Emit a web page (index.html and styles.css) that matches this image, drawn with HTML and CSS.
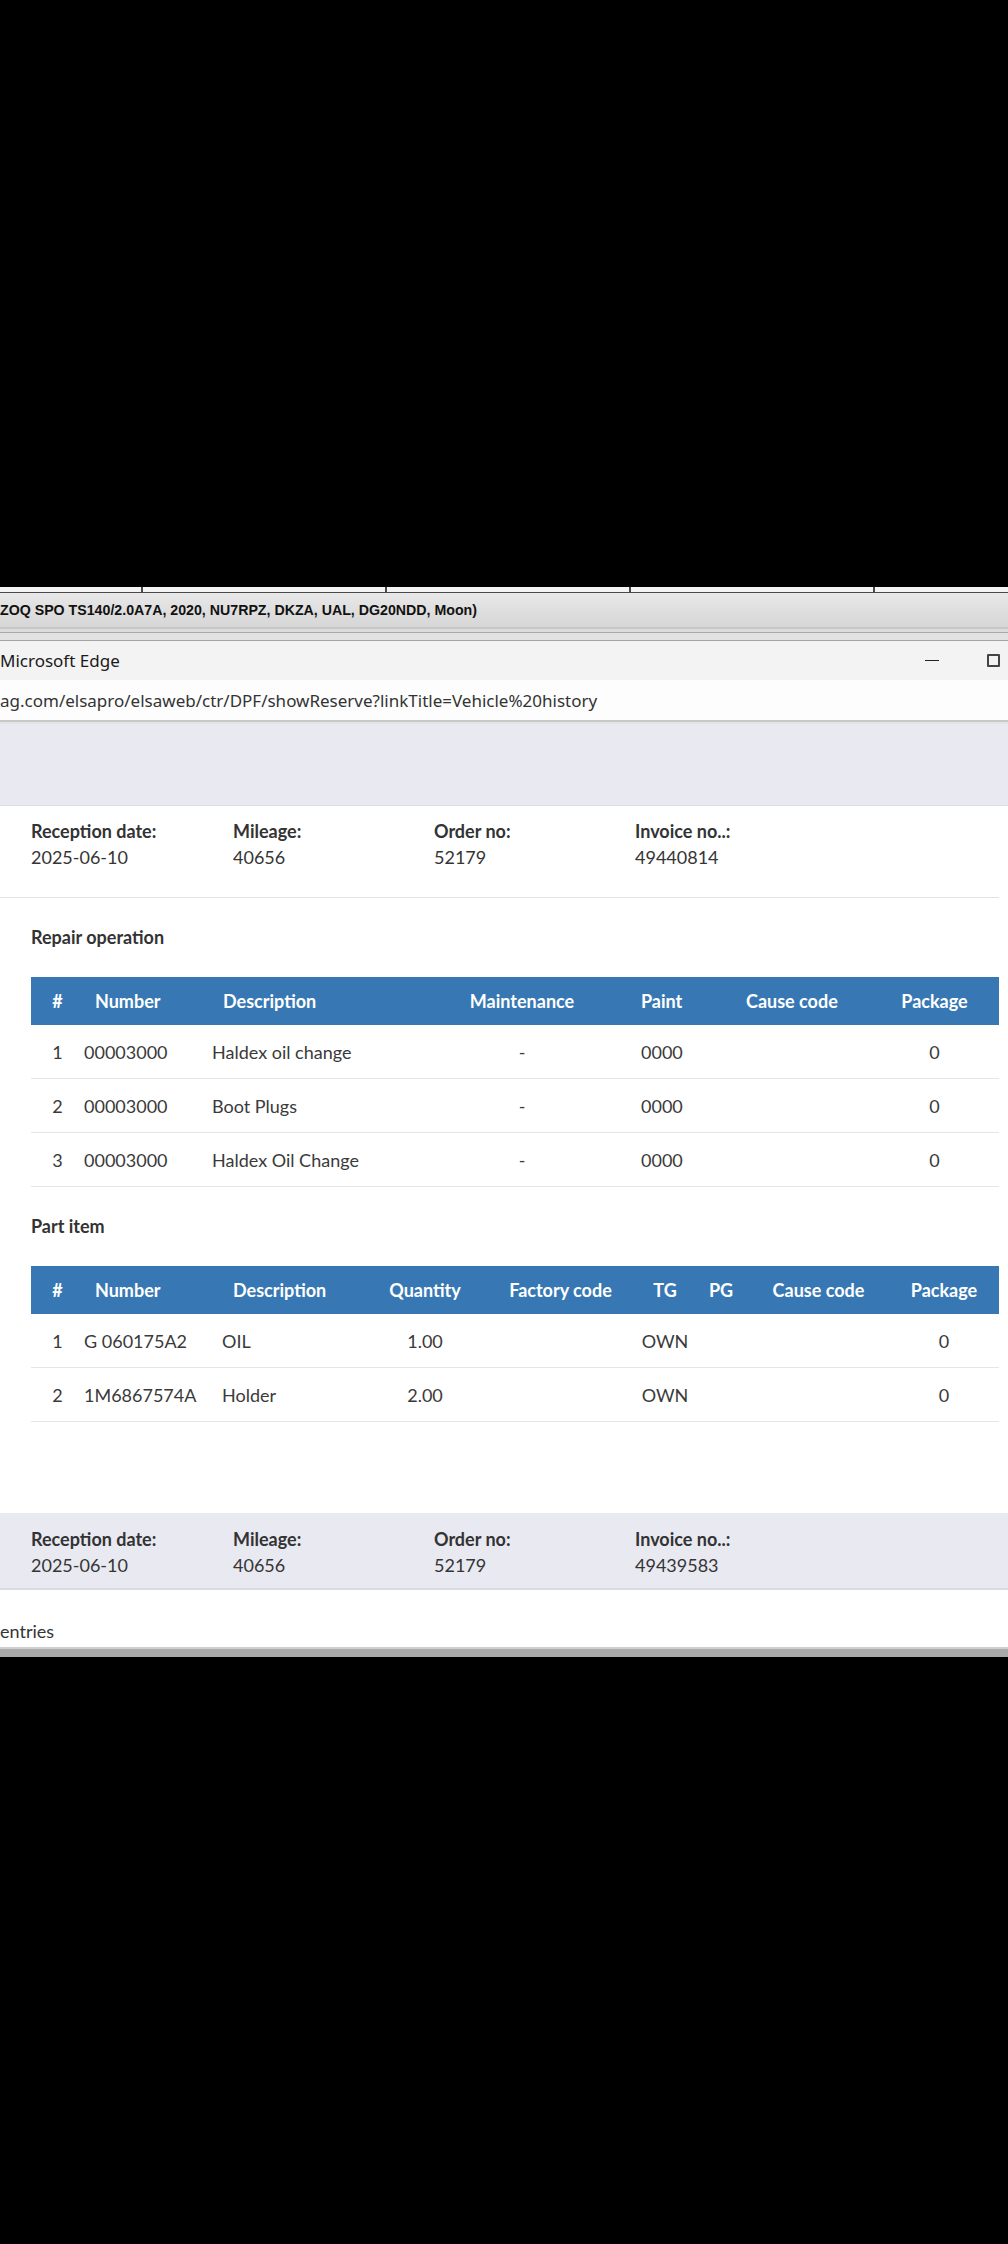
FILE: index.html
```html
<!DOCTYPE html>
<html lang="en">
<head>
<meta charset="utf-8">
<title>Vehicle history</title>
<link rel="stylesheet" href="styles.css">
</head>
<body>
<div class="black-top"></div>
<div class="colstrip">
  <div class="cs c1"></div><div class="cs c2"></div><div class="cs c3"></div><div class="cs c4"></div><div class="cs c5"></div>
</div>
<div class="titlebar"><span class="title-text">ZOQ SPO TS140/2.0A7A, 2020, NU7RPZ, DKZA, UAL, DG20NDD, Moon)</span></div>
<div class="sep"><div class="sep-inner"></div></div>
<div class="edgebar">
  <span class="edge-title">Microsoft Edge</span>
  <div class="win-controls">
    <span class="minimize"></span>
    <span class="maximize"></span>
  </div>
</div>
<div class="urlbar"><span class="url">ag.com/elsapro/elsaweb/ctr/DPF/showReserve?linkTitle=Vehicle%20history</span></div>
<div class="urlline"></div>
<div class="page">
  <div class="lav-top"></div>
  <div class="record">
    <div class="details">
      <div class="field"><div class="label">Reception date:</div><div class="value">2025-06-10</div></div>
      <div class="field"><div class="label">Mileage:</div><div class="value">40656</div></div>
      <div class="field"><div class="label">Order no:</div><div class="value">52179</div></div>
      <div class="field"><div class="label">Invoice no..:</div><div class="value">49440814</div></div>
    </div>
  </div>
  <div class="section">
    <h2 class="section-title">Repair operation</h2>
    <table class="grid">
      <colgroup>
        <col style="width:53px"><col style="width:128px"><col style="width:225px"><col style="width:170px"><col style="width:128px"><col style="width:135px"><col style="width:129px">
      </colgroup>
      <thead>
        <tr><th class="ctr">#</th><th class="hpad">Number</th><th class="hpad">Description</th><th class="ctr">Maintenance</th><th class="pad34">Paint</th><th class="hpad">Cause code</th><th class="ctr">Package</th></tr>
      </thead>
      <tbody>
        <tr><td class="ctr">1</td><td>00003000</td><td>Haldex oil change</td><td class="ctr">-</td><td class="pad34">0000</td><td></td><td class="ctr">0</td></tr>
        <tr><td class="ctr">2</td><td>00003000</td><td>Boot Plugs</td><td class="ctr">-</td><td class="pad34">0000</td><td></td><td class="ctr">0</td></tr>
        <tr><td class="ctr">3</td><td>00003000</td><td>Haldex Oil Change</td><td class="ctr">-</td><td class="pad34">0000</td><td></td><td class="ctr">0</td></tr>
      </tbody>
    </table>
    <h2 class="section-title">Part item</h2>
    <table class="grid">
      <colgroup>
        <col style="width:53px"><col style="width:138px"><col style="width:143px"><col style="width:120px"><col style="width:151px"><col style="width:58px"><col style="width:54px"><col style="width:141px"><col style="width:110px">
      </colgroup>
      <thead>
        <tr><th class="ctr">#</th><th class="hpad">Number</th><th class="hpad">Description</th><th class="ctr">Quantity</th><th class="ctr">Factory code</th><th class="ctr">TG</th><th class="ctr">PG</th><th class="ctr">Cause code</th><th class="ctr">Package</th></tr>
      </thead>
      <tbody>
        <tr><td class="ctr">1</td><td>G 060175A2</td><td>OIL</td><td class="ctr">1.00</td><td></td><td class="ctr">OWN</td><td></td><td></td><td class="ctr">0</td></tr>
        <tr><td class="ctr">2</td><td>1M6867574A</td><td>Holder</td><td class="ctr">2.00</td><td></td><td class="ctr">OWN</td><td></td><td></td><td class="ctr">0</td></tr>
      </tbody>
    </table>
  </div>
  <div class="record lav">
    <div class="details">
      <div class="field"><div class="label">Reception date:</div><div class="value">2025-06-10</div></div>
      <div class="field"><div class="label">Mileage:</div><div class="value">40656</div></div>
      <div class="field"><div class="label">Order no:</div><div class="value">52179</div></div>
      <div class="field"><div class="label">Invoice no..:</div><div class="value">49439583</div></div>
    </div>
  </div>
  <div class="footer-info">entries</div>
</div>
<div class="bottom-bar"></div>
</body>
</html>
```
FILE: styles.css
```css
html, body {
  margin: 0;
  padding: 0;
  background: #000;
}
body {
  width: 1008px;
  min-height: 2244px;
  overflow: hidden;
}
.black-top {
  height: 587px;
  background: #000;
}
.colstrip {
  display: flex;
  height: 5px;
  background: #f4f4f4;
  border-bottom: 1px solid #4a4a4a;
}
.cs {
  height: 100%;
  border-right: 2px solid #4a4a4a;
}
.c1 { width: 141px; }
.c2 { width: 242px; }
.c3 { width: 242px; }
.c4 { width: 242px; }
.c5 { flex: 1; border-right: none; }
.titlebar {
  height: 34px;
  background: linear-gradient(#e8e8e8, #d6d6d6);
  display: flex;
  align-items: center;
  white-space: nowrap;
}
.title-text {
  font-family: "Liberation Sans", Arial, sans-serif;
  font-weight: bold;
  font-size: 14.2px;
  color: #111;
}
.sep {
  height: 14px;
  background: #dcdcdc;
  border-top: 2px solid #c6c6c6;
  box-sizing: border-box;
}
.sep-inner {
  margin-top: 3px;
  height: 7px;
  border-top: 1px solid #a9a9a9;
  border-bottom: 1px solid #a4a4a4;
  background: #e2e2e2;
}
.edgebar {
  height: 39px;
  background: #f3f3f3;
  display: flex;
  align-items: center;
  justify-content: space-between;
  white-space: nowrap;
}
.edge-title {
  font-family: "Noto Sans", "Open Sans", sans-serif;
  font-size: 17px;
  color: #1a1a1a;
}
.win-controls {
  display: flex;
  align-items: center;
  gap: 48px;
  margin-right: 8px;
}
.minimize {
  display: block;
  width: 14px;
  height: 1.5px;
  background: #222;
}
.maximize {
  display: block;
  width: 9px;
  height: 9px;
  border: 2px solid #444;
  border-radius: 1px;
}
.urlbar {
  height: 40px;
  background: #fdfdfd;
  display: flex;
  align-items: center;
  white-space: nowrap;
}
.url {
  font-family: "Noto Sans", "Open Sans", sans-serif;
  font-size: 17px;
  color: #333;
}
.urlline {
  height: 4px;
  background: #e4e4e4;
  border-top: 2px solid #c8c8c8;
  box-sizing: border-box;
}
.page {
  background: #fff;
  font-family: Lato, "Open Sans", sans-serif;
  color: #353535;
}
.lav-top {
  height: 81px;
  background: #e9e9f2;
  border-bottom: 1px solid #dcdce6;
}
.record {
  margin-right: 9px;
  padding: 12px 0 27px 31px;
  border-bottom: 1px solid #e2e2e2;
}
.record.lav {
  margin-right: 0;
  margin-top: 91px;
  padding: 13px 0 10px 31px;
  background: #e9e9f2;
  border-bottom: 2px solid #dadae4;
}
.details {
  display: grid;
  grid-template-columns: 202px 201px 201px 201px;
}
.label {
  font-weight: bold;
  font-size: 18px;
  line-height: 26px;
  color: #333;
}
.value {
  font-size: 18px;
  line-height: 26px;
}
.section {
  padding: 0 9px 0 31px;
}
.section-title {
  margin: 26px 0 27px;
  font-size: 18px;
  line-height: 26px;
  font-weight: bold;
  color: #333;
}
.grid {
  width: 968px;
  table-layout: fixed;
  border-collapse: collapse;
  font-size: 18px;
}
.grid th {
  height: 48px;
  padding: 0;
  background: #3778b4;
  color: #fff;
  font-weight: bold;
  text-align: left;
  white-space: nowrap;
}
.grid td {
  height: 53px;
  padding: 0;
  border-bottom: 1px solid #e6e6e6;
  white-space: nowrap;
  color: #3a3a3a;
}
.grid th.hpad { padding-left: 11px; }
.grid .pad34 { padding-left: 34px; }
.grid .ctr { text-align: center; }
.footer-info {
  padding: 28px 0 3px 0;
  font-size: 18px;
  line-height: 26px;
}
.bottom-bar {
  height: 10px;
  background: #a9a9a9;
  border-top: 2px solid #cfcfcf;
  box-sizing: border-box;
}
```
